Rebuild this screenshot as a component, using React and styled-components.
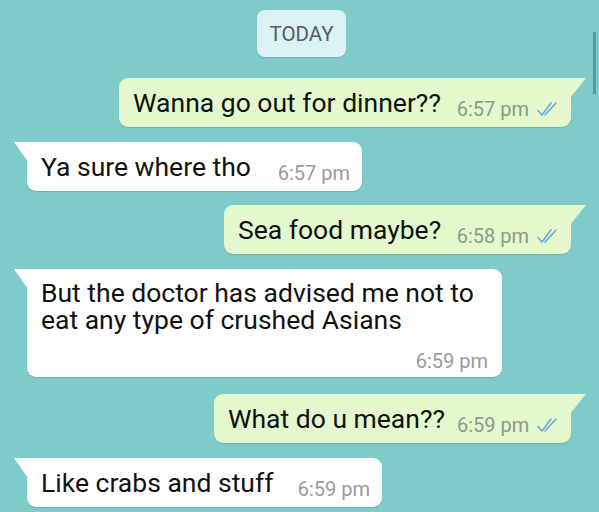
import React from 'react';
import styled, { createGlobalStyle, css } from 'styled-components';

const GlobalStyle = createGlobalStyle`
  html, body {
    margin: 0;
    padding: 0;
    background: #7fcbc9;
  }
  body {
    font-family: Roboto, "Noto Sans", "Liberation Sans", sans-serif;
  }
`;

const Chat = styled.div`
  position: relative;
  width: 599px;
  height: 512px;
  overflow: hidden;
  background: #7fcbc9;
  display: flex;
  flex-direction: column;
  padding-top: 10px;
  box-sizing: border-box;

  & > * {
    flex-shrink: 0;
  }
`;

const Scrollbar = styled.div`
  position: absolute;
  right: 3px;
  top: 32px;
  width: 3px;
  height: 62px;
  background: #4f9c98;
`;

const DayPill = styled.div`
  align-self: center;
  margin-left: 4px;
  width: 89px;
  height: 47px;
  border-radius: 8px;
  background: #dbf1f4;
  color: #4d5d69;
  font-size: 20.5px;
  display: flex;
  align-items: center;
  justify-content: center;
  box-shadow: 0 1px 1px rgba(0, 0, 0, 0.12);
  margin-bottom: 21px;
`;

const Row = styled.div`
  display: flex;
  justify-content: ${p => (p.$out ? 'flex-end' : 'flex-start')};
  padding: ${p => (p.$out ? '0 28px 0 0' : '0 0 0 27px')};
  margin-bottom: ${p => p.$gap || 15}px;
`;

const Bubble = styled.div`
  position: relative;
  box-sizing: border-box;
  background: ${p => (p.$out ? '#e3f8cd' : '#ffffff')};
  border-radius: 9px;
  ${p => (p.$out ? css`border-top-right-radius: 0;` : css`border-top-left-radius: 0;`)}
  box-shadow: 0 1px 1px rgba(0, 0, 0, 0.14);
  color: #111;
  font-size: 26.5px;
  min-height: 49px;
  padding: ${p => (p.$multi ? '10px 14px 6px 14px' : '0 12px 0 14px')};
  display: flex;
  ${p => (p.$multi ? css`flex-direction: column;` : css`align-items: flex-end;`)}
  width: ${p => p.$w}px;
`;

const Tail = styled.svg`
  position: absolute;
  top: 0;
  ${p => (p.$out ? css`right: -15px;` : css`left: -13px;`)}
`;

const Text = styled.span`
  line-height: ${p => (p.$multi ? 27 : 26)}px;
  padding-bottom: ${p => (p.$multi ? 0 : 11)}px;
  white-space: ${p => (p.$multi ? 'normal' : 'nowrap')};
`;

const Meta = styled.span`
  margin-left: auto;
  padding-left: 12px;
  padding-bottom: 8px;
  display: flex;
  align-items: center;
  gap: 8px;
  font-size: 20px;
  line-height: 20px;
  color: ${p => (p.$out ? '#8c9a87' : '#9a9a9a')};
  white-space: nowrap;
  ${p => p.$multi && css`
    padding-bottom: 0;
    margin-top: 18px;
  `}
`;

const Ticks = () => (
  <svg width="22" height="16" viewBox="0 0 22 16">
    <path d="M1 9.5 L5 14 L14 2" fill="none" stroke="#68a9de" strokeWidth="1.6" strokeLinecap="round" strokeLinejoin="round" />
    <path d="M8 14 L19 2" fill="none" stroke="#68a9de" strokeWidth="1.6" strokeLinecap="round" />
  </svg>
);

const BubbleTail = ({ out }) =>
  out ? (
    <Tail $out width="16" height="20" viewBox="0 0 16 20">
      <path d="M0 0 L16 0 L0 20 Z" fill="#e3f8cd" />
    </Tail>
  ) : (
    <Tail width="14" height="20" viewBox="0 0 14 20">
      <path d="M14 0 L0 0 L14 20 Z" fill="#ffffff" />
    </Tail>
  );

const messages = [
  { out: true, text: 'Wanna go out for dinner??', time: '6:57 pm', w: 452 },
  { out: false, text: 'Ya sure where tho', time: '6:57 pm', w: 335, gap: 14 },
  { out: true, text: 'Sea food maybe?', time: '6:58 pm', w: 347 },
  {
    out: false,
    multi: true,
    text: 'But the doctor has advised me not to eat any type of crushed Asians',
    time: '6:59 pm',
    w: 475,
    gap: 17,
  },
  { out: true, text: 'What do u mean??', time: '6:59 pm', w: 357 },
  { out: false, text: 'Like crabs and stuff', time: '6:59 pm', w: 355 },
];

export default function App() {
  return (
    <>
      <GlobalStyle />
      <Chat>
        <Scrollbar />
        <DayPill>TODAY</DayPill>
        {messages.map((m, i) => (
          <Row key={i} $out={m.out} $gap={m.gap}>
            <Bubble $out={m.out} $multi={m.multi} $w={m.w}>
              <BubbleTail out={m.out} />
              <Text $multi={m.multi}>{m.text}</Text>
              <Meta $out={m.out} $multi={m.multi}>
                {m.time}
                {m.out && <Ticks />}
              </Meta>
            </Bubble>
          </Row>
        ))}
      </Chat>
    </>
  );
}
